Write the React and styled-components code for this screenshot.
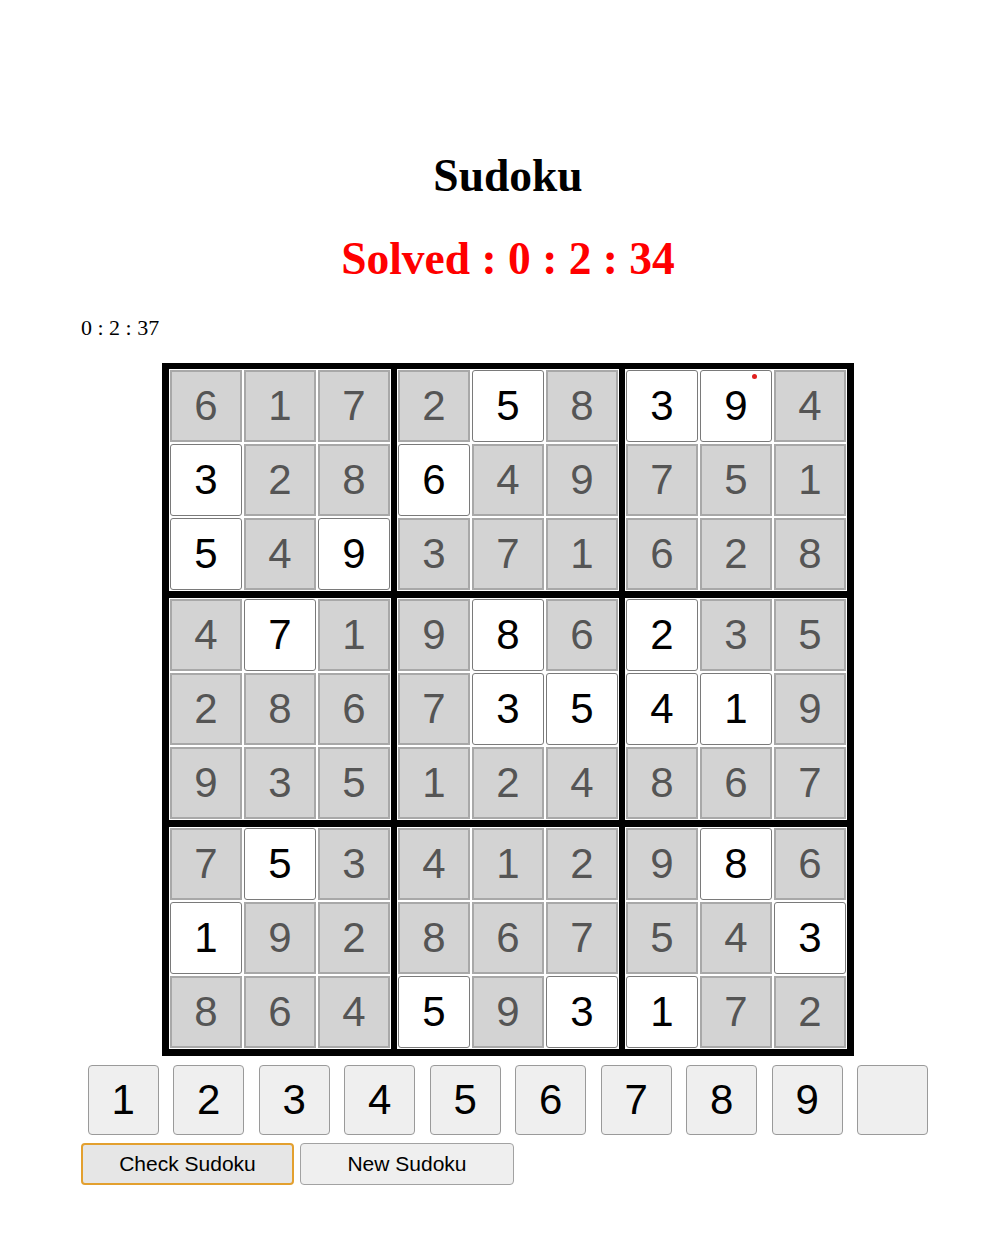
import React from "react";
import styled, { createGlobalStyle } from "styled-components";

const Global = createGlobalStyle`
  html, body { margin: 0; padding: 0; background: #ffffff; }
  body { font-family: "Liberation Serif", "Times New Roman", serif; color: #000; }
`;

const Page = styled.div`
  width: 854px;
  margin-left: 81px;
  padding-top: 150px;
  padding-bottom: 60px;
`;

const Title = styled.h1`
  margin: 0;
  font-family: "Liberation Serif", serif;
  font-weight: bold;
  font-size: 45.5px;
  line-height: 52px;
  text-align: center;
  color: ${(p) => p.$color || "#000"};
  margin-top: ${(p) => p.$top || 0}px;
`;

const Clock = styled.div`
  margin-top: 30px;
  font-family: "Liberation Serif", serif;
  font-size: 22px;
  line-height: 26px;
  text-align: left;
`;

const Board = styled.div`
  margin: 22px auto 0;
  width: max-content;
  display: grid;
  grid-template-columns: repeat(3, auto);
  column-gap: 6px;
  row-gap: 7px;
  padding: 6px 7px 7px 7px;
  background: #000;
`;

const Block = styled.div`
  display: grid;
  grid-template-columns: repeat(3, 72px);
  grid-auto-rows: 72px;
  gap: 2px;
  padding: 1px;
  background: #fff;
`;

const Cell = styled.div`
  position: relative;
  box-sizing: border-box;
  display: flex;
  align-items: center;
  justify-content: center;
  font-family: "Liberation Sans", Arial, sans-serif;
  font-size: 42px;
  background: ${(p) => (p.$given ? "#d3d3d3" : "#ffffff")};
  border: ${(p) => (p.$given ? "2px solid #a8a8a8" : "1px solid #7a7a7a")};
  border-radius: ${(p) => (p.$given ? "0" : "3px")};
  color: ${(p) => (p.$given ? "#555555" : "#000000")};
`;

const Dot = styled.span`
  position: absolute;
  top: 3px;
  left: 51px;
  width: 5px;
  height: 5px;
  border-radius: 50%;
  background: #e0201f;
`;

const NumberRow = styled.div`
  margin-top: 9px;
  display: flex;
  justify-content: center;
  gap: 14.5px;
`;

const NumButton = styled.button`
  box-sizing: border-box;
  width: 71px;
  height: 70px;
  padding: 0;
  background: #efefef;
  border: 1px solid #9a9a9a;
  border-radius: 4px;
  font-family: "Liberation Sans", Arial, sans-serif;
  font-size: 42px;
  color: #000;
  display: flex;
  align-items: center;
  justify-content: center;
`;

const ActionRow = styled.div`
  margin-top: 8px;
  display: flex;
  gap: 6px;
`;

const ActionButton = styled.button`
  box-sizing: border-box;
  width: ${(p) => (p.$active ? 213 : 214)}px;
  height: 42px;
  padding: 0;
  background: ${(p) => (p.$active ? "#e6e6e6" : "#efefef")};
  border: ${(p) => (p.$active ? "2px solid #e3a02f" : "1px solid #a2a2a2")};
  border-radius: 4px;
  font-family: "Liberation Sans", Arial, sans-serif;
  font-size: 21px;
  color: #000;
`;

const grid = [
  "617258394",
  "328649751",
  "549371628",
  "471986235",
  "286735419",
  "935124867",
  "753412986",
  "192867543",
  "864593172",
];

const open = [
  "000010110",
  "100100000",
  "101000000",
  "010010100",
  "000011110",
  "000000000",
  "010000010",
  "100000001",
  "000101100",
];

export default function App() {
  const blocks = [];
  for (let br = 0; br < 3; br++) {
    for (let bc = 0; bc < 3; bc++) {
      const cells = [];
      for (let r = br * 3; r < br * 3 + 3; r++) {
        for (let c = bc * 3; c < bc * 3 + 3; c++) {
          const isOpen = open[r][c] === "1";
          cells.push(
            <Cell key={`${r}-${c}`} $given={!isOpen}>
              {grid[r][c]}
              {r === 0 && c === 7 && <Dot />}
            </Cell>
          );
        }
      }
      blocks.push(<Block key={`${br}-${bc}`}>{cells}</Block>);
    }
  }

  return (
    <>
      <Global />
      <Page>
        <Title>Sudoku</Title>
        <Title $color="#ff0000" $top={31}>
          Solved : 0 : 2 : 34
        </Title>
        <Clock>0 : 2 : 37</Clock>
        <Board>{blocks}</Board>
        <NumberRow>
          {["1", "2", "3", "4", "5", "6", "7", "8", "9", ""].map((n, i) => (
            <NumButton key={i}>{n}</NumButton>
          ))}
        </NumberRow>
        <ActionRow>
          <ActionButton $active>Check Sudoku</ActionButton>
          <ActionButton>New Sudoku</ActionButton>
        </ActionRow>
      </Page>
    </>
  );
}
